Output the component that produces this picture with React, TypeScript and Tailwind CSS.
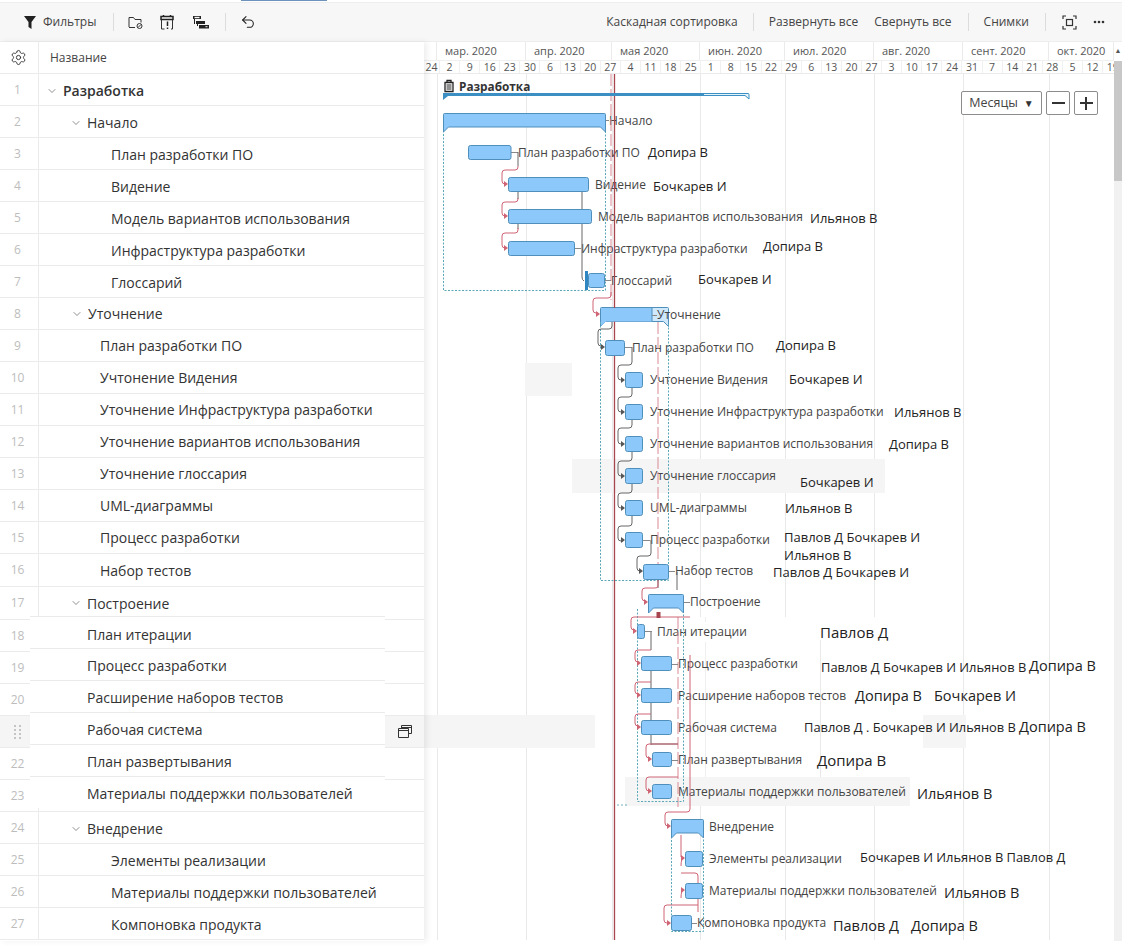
import React from 'react';
import { ChevronDown, Settings, Undo2 } from 'lucide-react';

type Row = { n: number; name: string; pad: string; open?: boolean; bold?: boolean; patch?: string; h?: string; nudge?: boolean };

const rows: Row[] = [
  { n: 1, name: 'Разработка', pad: 'pl-[7px]', open: true, bold: true, nudge: true },
  { n: 2, name: 'Начало', pad: 'pl-[31px]', open: true, nudge: true },
  { n: 3, name: 'План разработки ПО', pad: 'pl-[72px]', nudge: true },
  { n: 4, name: 'Видение', pad: 'pl-[72px]', nudge: true },
  { n: 5, name: 'Модель вариантов использования', pad: 'pl-[72px]', nudge: true },
  { n: 6, name: 'Инфраструктура разработки', pad: 'pl-[72px]', nudge: true },
  { n: 7, name: 'Глоссарий', pad: 'pl-[72px]', nudge: true },
  { n: 8, name: 'Уточнение', pad: 'pl-[32px]', open: true },
  { n: 9, name: 'План разработки ПО', pad: 'pl-[61px]' },
  { n: 10, name: 'Учтонение Видения', pad: 'pl-[61px]' },
  { n: 11, name: 'Уточнение Инфраструктура разработки', pad: 'pl-[61px]' },
  { n: 12, name: 'Уточнение вариантов использования', pad: 'pl-[61px]' },
  { n: 13, name: 'Уточнение глоссария', pad: 'pl-[61px]' },
  { n: 14, name: 'UML-диаграммы', pad: 'pl-[61px]' },
  { n: 15, name: 'Процесс разработки', pad: 'pl-[61px]' },
  { n: 16, name: 'Набор тестов', pad: 'pl-[61px]', h: 'h-[33px]' },
  { n: 17, name: 'Построение', pad: 'pl-[31px]', open: true, h: 'h-[33px]' },
  { n: 18, name: 'План итерации', pad: '', patch: 'pt-1' },
  { n: 19, name: 'Процесс разработки', pad: '', patch: 'pt-[2px]' },
  { n: 20, name: 'Расширение наборов тестов', pad: '', patch: 'pt-[2px]' },
  { n: 21, name: 'Рабочая система', pad: '', patch: 'pt-[2px]' },
  { n: 22, name: 'План развертывания', pad: '', patch: 'pt-[2px]' },
  { n: 23, name: 'Материалы поддержки пользователей', pad: '', patch: 'pt-[2px]' },
  { n: 24, name: 'Внедрение', pad: 'pl-[31px]', open: true, nudge: true },
  { n: 25, name: 'Элементы реализации', pad: 'pl-[72px]', nudge: true },
  { n: 26, name: 'Материалы поддержки пользователей', pad: 'pl-[72px]', nudge: true },
  { n: 27, name: 'Компоновка продукта', pad: 'pl-[72px]', nudge: true },
];

const months = [
  { label: 'мар. 2020', w: 'w-[89px]' },
  { label: 'апр. 2020', w: 'w-[86px]' },
  { label: 'мая 2020', w: 'w-[88px]' },
  { label: 'июн. 2020', w: 'w-[85px]' },
  { label: 'июл. 2020', w: 'w-[89px]' },
  { label: 'авг. 2020', w: 'w-[89px]' },
  { label: 'сент. 2020', w: 'w-[86px]' },
  { label: 'окт. 2020', w: 'w-[65px]' },
];

const weeks = [2, 9, 16, 23, 30, 6, 13, 20, 27, 4, 11, 18, 25, 1, 8, 15, 22, 29, 6, 13, 20, 27, 3, 10, 17, 24, 31, 7, 14, 21, 28, 5, 12, 19];

const gridLines = [437, 526, 612, 700, 785, 874, 963, 1049];

const labels: [string, number, number][] = [
  ['Начало', 609, 121],
  ['План разработки ПО', 518, 153],
  ['Видение', 595, 185],
  ['Модель вариантов использования', 598, 217],
  ['Инфраструктура разработки', 581, 249],
  ['Глоссарий', 611, 281],
  ['Уточнение', 657, 315],
  ['План разработки ПО', 632, 348],
  ['Учтонение Видения', 650, 380],
  ['Уточнение Инфраструктура разработки', 650, 412],
  ['Уточнение вариантов использования', 650, 444],
  ['Уточнение глоссария', 650, 476],
  ['UML-диаграммы', 650, 508],
  ['Процесс разработки', 650, 540],
  ['Набор тестов', 675, 571],
  ['Построение', 690, 602],
  ['План итерации', 657, 632],
  ['Процесс разработки', 678, 664],
  ['Расширение наборов тестов', 678, 696],
  ['Рабочая система', 678, 728],
  ['План развертывания', 678, 760],
  ['Материалы поддержки пользователей', 678, 792],
  ['Внедрение', 709, 827],
  ['Элементы реализации', 709, 859],
  ['Материалы поддержки пользователей', 709, 891],
  ['Компоновка продукта', 697, 923],
];

const people: [string, number, number, string?][] = [
  ['Допира В', 648, 152],
  ['Бочкарев И', 653, 186],
  ['Ильянов В', 810, 218],
  ['Допира В', 763, 246],
  ['Бочкарев И', 698, 279],
  ['Допира В', 776, 345],
  ['Бочкарев И', 789, 379],
  ['Ильянов В', 894, 412],
  ['Допира В', 889, 444],
  ['Бочкарев И', 800, 482],
  ['Ильянов В', 785, 508],
  ['Павлов Д Бочкарев И', 784, 537],
  ['Ильянов В', 784, 555],
  ['Павлов Д Бочкарев И', 773, 572],
  ['Павлов Д', 820, 632, 'text-[15px]'],
  ['Павлов Д Бочкарев И Ильянов В', 821, 667, 'text-[12.9px]'],
  ['Допира В', 1029, 666, 'text-[14.5px]'],
  ['Допира В', 855, 696, 'text-[14.5px]'],
  ['Бочкарев И', 934, 696, 'text-[14.5px]'],
  ['Павлов Д . Бочкарев И Ильянов В', 804, 727, 'text-[12.9px]'],
  ['Допира В', 1019, 727, 'text-[14.5px]'],
  ['Допира В', 817, 760, 'text-[15px]'],
  ['Ильянов В', 917, 794, 'text-[14.5px]'],
  ['Бочкарев И Ильянов В Павлов Д', 860, 857, 'text-[12.9px]'],
  ['Ильянов В', 944, 893, 'text-[14.5px]'],
  ['Павлов Д', 833, 926, 'text-[14.5px]'],
  ['Допира В', 911, 926, 'text-[14.5px]'],
];

// plain task bars: x1, x2, y1, y2
const bars = [
  [468, 511.5, 145, 159],
  [508, 589, 177, 191],
  [508, 592, 209, 223],
  [508, 575, 241, 255],
  [588, 605, 273, 287],
  [605, 625, 340, 355],
  [625, 643, 372, 387],
  [625, 643, 404, 419],
  [625, 643, 436, 451],
  [625, 643, 468, 483],
  [625, 643, 500, 515],
  [625, 643, 532, 547],
  [643, 669, 564, 579],
  [637, 645, 624, 638],
  [641, 672, 656, 670],
  [641, 672, 688, 702],
  [641, 672, 720, 734],
  [652, 672, 752, 766],
  [652, 672, 784, 798],
  [685, 703, 851, 866],
  [685, 703, 883, 898],
  [671, 692, 915, 930],
];

// dashed child frames under the summary bars
const frames = [
  [443.5, 605.5, 127, 290.5],
  [600.5, 668.5, 322, 580.5],
  [637.5, 683.5, 609, 801.5],
  [671.5, 703.5, 833, 931.5],
];

const criticalLinks = [
  'M518 166v1q0 3-3 3h-10q-3 0-3 3v8q0 3 3 3h1',
  'M518 198v1q0 3-3 3h-10q-3 0-3 3v8q0 3 3 3h1',
  'M518 228v2q0 3-3 3h-10q-3 0-3 3v9q0 3 3 3h1',
  'M611 292v3q0 3-3 3h-12q-3 0-3 3v9q0 3 3 3h2',
  'M658 580v6q0 2-3 2h-10q-3 0-3 3v7q0 3 3 3h1',
  'M690 617H634q-3 0-3 3v7q0 3 3 3h1',
  'M651 650h-13q-3 0-3 3v6q0 3 3 3h1',
  'M651 682h-13q-3 0-3 3v6q0 3 3 3h1',
  'M651 714h-13q-3 0-3 3v6q0 3 3 3h1',
  'M678 744h-29q-3 0-3 3v8q0 3 3 3h1',
  'M678 777h-29q-3 0-3 3v8q0 3 3 3h1',
  'M690 655v154q0 3-3 3h-19q-3 0-3 3v8q0 3 3 3h1',
  'M681 835v22',
  'M681 866q0-8 3-8',
  'M681 873h14q3 0 3 3v36',
  'M681 898q0-8 3-8',
  'M698 905h-31q-3 0-3 3v12q0 3 3 3h2',
];

const plainLinks = [
  'M518 152v14',
  'M518 191v8',
  'M518 223v6',
  'M582 191v86q0 3 2 4',
  'M612 322v4q0 3-3 3h-8q-3 0-3 3v11q0 3 3 3h2',
  'M632 347v15q0 3-3 3h-8q-3 0-3 3v9q0 3 3 3h2',
  'M632 387v7q0 3-3 3h-8q-3 0-3 3v9q0 3 3 3h2',
  'M632 419v6q0 3-3 3h-8q-3 0-3 3v10q0 3 3 3h2',
  'M632 451v7q0 3-3 3h-8q-3 0-3 3v9q0 3 3 3h2',
  'M632 483v7q0 3-3 3h-8q-3 0-3 3v9q0 3 3 3h2',
  'M632 515v8q0 3-3 3h-8q-3 0-3 3v9q0 3 3 3h2',
  'M651 540v13q0 3-3 3h-8q-3 0-3 3v9q0 3 3 3h2',
  'M677 572v18',
  'M658 579v9',
  'M651 632v18',
  'M651 670v75',
  'M651 744h27',
];

const critArrows = [
  [508, 184], [508, 216], [508, 248], [600, 314], [648, 602], [637, 631], [641, 663], [641, 695], [641, 727],
  [652, 759], [652, 791], [671, 826], [685, 858], [685, 890], [671, 923],
];
const plainArrows = [[605, 347], [625, 380], [625, 412], [625, 444], [625, 476], [625, 508], [625, 540], [643, 571]];

// short ticks from a bar to its caption
const ticks = [
  [605, 609, 120], [511, 518, 152], [652, 657, 315], [625, 632, 347], [643, 650, 540], [669, 675, 571], [684, 690, 602],
  [645, 652, 631], [672, 678, 664], [672, 678, 760], [575, 581, 248], [605, 611, 280], [692, 697, 923],
];

function Summary({ x1, x2, y1, y2, fill = '#8dc8fa' }: { x1: number; x2: number; y1: number; y2: number; fill?: string }) {
  return (
    <path
      d={`M${x1 + 1} ${y1}H${x2 - 1}q1 0 1 1V${y2 + 5}l-5 -5H${x1 + 5}l-5 5V${y1 + 1}q0-1 1-1z`}
      fill={fill}
      stroke="#4f8fbb"
      strokeWidth="1"
    />
  );
}

function Chart() {
  return (
    <div className="relative h-[866px] w-[690px] overflow-hidden bg-white">
      <svg className="absolute left-0 top-0" width="690" height="866" viewBox="424 74 690 866">
        {gridLines.map((x) => (
          <line key={x} x1={x + 0.5} x2={x + 0.5} y1="74" y2="940" stroke="#e9e9e9" />
        ))}
        <rect x="690" y="617" width="272" height="189" fill="#fff" />
        <line x1="705.5" x2="705.5" y1="617" y2="806" stroke="#efefef" />
        <line x1="820.5" x2="820.5" y1="640" y2="806" stroke="#e9e9e9" />
        <rect x="525" y="363" width="47" height="33" fill="#f5f5f5" />
        <rect x="572" y="459" width="313" height="34" fill="#f5f5f5" />
        <rect x="424" y="715" width="171" height="33" fill="#f5f5f5" />
        <rect x="923" y="715" width="43" height="33" fill="#f5f5f5" />
        <rect x="625" y="777" width="285" height="29" fill="#f5f5f5" />
        <rect x="645" y="622" width="110" height="20" fill="#fff" />
        {/* unfinished part of the Уточнение bar sits under its caption */}
        <Summary x1={600.5} x2={668.5} y1={307.5} y2={321.5} fill="#cfe8fb" />
      </svg>

      {labels.map(([text, x, y], i) => (
        <span
          key={i}
          className="absolute -translate-y-1/2 whitespace-nowrap text-[12px] leading-4 text-[#444]"
          style={{ left: x - 424, top: y - 74 }}
        >
          {text}
        </span>
      ))}
      {people.map(([text, x, y, size], i) => (
        <span
          key={i}
          className={`absolute -translate-y-1/2 whitespace-nowrap leading-4 text-[#222] ${size ?? 'text-[13px]'}`}
          style={{ left: x - 424, top: y - 74 }}
        >
          {text}
        </span>
      ))}
      <span className="absolute left-[35px] top-[4px] whitespace-nowrap text-[11.8px] font-bold leading-4 text-[#333]">Разработка</span>

      <svg className="absolute left-0 top-0" width="690" height="866" viewBox="424 74 690 866" fill="none">
        {/* task list icon */}
        <path d="M445 82.5h8v9h-8zM447 82v-1.5h4V82" stroke="#222" strokeWidth="1.3" />
        <path d="M446.5 85h5M446.5 87h5M446.5 89h5" stroke="#222" />

        {/* today and deadline lines */}
        <path d="M611 74v226" stroke="#d98a94" strokeWidth="1" strokeDasharray="12 3" />
        <path d="M658 322v258" stroke="#d98a94" strokeWidth="1" strokeDasharray="12 3" />
        <path d="M678 617v190" stroke="#d98a94" strokeWidth="1" strokeDasharray="12 3" />
        <path d="M614.5 74V940" stroke="#a8464f" strokeWidth="1.3" />
        <path d="M627 805h-12" stroke="#6fb0bd" strokeWidth="1" strokeDasharray="2 2" />

        {frames.map(([x1, x2, y1, y2], i) => (
          <path key={i} d={`M${x1} ${y1}V${y2}H${x2}V${y1}`} stroke="#5aa7b8" strokeWidth="1" strokeDasharray="2 1.5" />
        ))}

        {ticks.map(([x1, x2, y], i) => (
          <path key={i} d={`M${x1} ${y + 0.5}H${x2}`} stroke="#888" />
        ))}
        {plainLinks.map((d, i) => (
          <path key={i} d={d} stroke="#666" strokeWidth="1" />
        ))}
        {criticalLinks.map((d, i) => (
          <path key={i} d={d} stroke="#cf6474" strokeWidth="1" />
        ))}
        {critArrows.map(([x, y], i) => (
          <path key={i} d={`M${x} ${y}l-4-3v6z`} fill="#cf6474" />
        ))}
        {plainArrows.map(([x, y], i) => (
          <path key={i} d={`M${x} ${y}l-4-3v6z`} fill="#555" />
        ))}

        {/* project bar */}
        <path d="M703 93.5H748q1 0 1 1V99l-4-3.5H703z" fill="#e6f3fb" stroke="#3c8fc2" strokeWidth="1" />
        <path d="M443 93h261v3H448l-5 4z" fill="#3c8fc2" />

        <Summary x1={443.5} x2={605.5} y1={113.5} y2={127} />
        <path d="M601 308h51v13.5H606l-5 4.5z" fill="#8dc8fa" />
        <path d="M652 308v13" stroke="#4f8fbb" />
        <Summary x1={648.5} x2={683.5} y1={594.5} y2={608} />
        <Summary x1={671.5} x2={703.5} y1={819.5} y2={833} />
        <rect x="656.5" y="612" width="4" height="6" fill="#a8464f" />

        {bars.map(([x1, x2, y1, y2], i) => (
          <rect key={i} x={x1 + 0.5} y={y1 + 0.5} width={x2 - x1 - 1} height={y2 - y1} rx="2" fill="#8dc8fa" stroke="#4f8fbb" />
        ))}
        <rect x="585" y="271" width="3" height="19" fill="#2f86c1" />
      </svg>

      <div className="absolute right-[16px] top-[17px] flex items-center gap-1">
        <button className="flex h-[24px] w-[81px] items-center justify-center gap-1.5 rounded-[2px] border border-[#8c8c8c] bg-white text-[12.5px] text-[#444]">
          Месяцы <span className="text-[10px] text-[#333]">▼</span>
        </button>
        <button className="flex h-[24px] w-[24px] items-center justify-center rounded-[2px] border border-[#8c8c8c] bg-white">
          <span className="h-[2px] w-[13px] bg-[#333]" />
        </button>
        <button className="relative flex h-[24px] w-[24px] items-center justify-center rounded-[2px] border border-[#8c8c8c] bg-white">
          <span className="h-[2px] w-[13px] bg-[#333]" />
          <span className="absolute h-[13px] w-[2px] bg-[#333]" />
        </button>
      </div>
    </div>
  );
}

function ToolbarSep({ className }: { className: string }) {
  return <span className={`block h-[18px] w-px bg-[#dcdcdc] ${className}`} />;
}

function Toolbar() {
  return (
    <div className="flex h-[38px] items-center justify-between bg-[#f7f7f7] text-[12px] text-[#444]">
      <div className="flex items-center">
        <svg className="ml-[24px]" width="12" height="13" viewBox="0 0 12 13">
          <path d="M0 0h12L7.5 6v7L4.500 11V6z" fill="#222" />
        </svg>
        <span className="ml-[7px] w-[53px] whitespace-nowrap">Фильтры</span>
        <ToolbarSep className="ml-[17px]" />
        <svg className="ml-[14px]" width="15" height="15" viewBox="0 0 15 15" fill="none" stroke="#333">
          <path d="M1 12V2.500h4.500l1.500 2h6v3M1 12.500h6" />
          <circle cx="11.500" cy="11" r="2.500" />
          <path d="M10 12.500l3-3" />
        </svg>
        <svg className="ml-[17px]" width="14" height="15" viewBox="0 0 14 15" fill="none">
          <path d="M1 1.500h12v3H1zM3.500 0v2M10.500 0v2" stroke="#222" strokeWidth="1.500" />
          <path d="M1.500 5v9h3M12.500 5v9h-1.500" stroke="#333" />
          <path d="M7.500 6.500v4.500M7.500 12.500v1.500" stroke="#222" strokeWidth="1.500" />
        </svg>
        <svg className="ml-[19px]" width="16" height="13" viewBox="0 0 16 13" fill="#222">
          <path d="M0 0h8v3H0zM1 3h1v5H1zM3 5h9v3H3zM4 8h1v2H4zM6 9h10v3.500H6z" />
          <path d="M1.500 0.800h5v1.400h-5z" fill="#f7f7f7" />
          <path d="M12.500 10.200h2v1h-2z" fill="#f7f7f7" />
        </svg>
        <ToolbarSep className="ml-[16px]" />
        <Undo2 className="ml-[14px] text-[#222]" size={16} strokeWidth={1.6} />
      </div>
      <div className="flex items-center">
        <span className="whitespace-nowrap">Каскадная сортировка</span>
        <ToolbarSep className="ml-[15px]" />
        <span className="ml-[15px] whitespace-nowrap">Развернуть все</span>
        <span className="ml-[16px] whitespace-nowrap">Свернуть все</span>
        <ToolbarSep className="ml-[16px]" />
        <span className="ml-[15px] whitespace-nowrap">Снимки</span>
        <ToolbarSep className="ml-[16px]" />
        <svg className="ml-[16px]" width="15" height="15" viewBox="0 0 15 15" fill="none" stroke="#333" strokeWidth="1.200">
          <path d="M1 4V1h3M11 1h3v3M1 11v3h3M14 11v3h-3" />
          <rect x="4.500" y="4.500" width="6" height="6" />
        </svg>
        <svg className="ml-[16px] mr-[17px]" width="12" height="4" viewBox="0 0 12 4" fill="#333">
          <circle cx="2" cy="2" r="1.300" />
          <circle cx="6" cy="2" r="1.300" />
          <circle cx="10" cy="2" r="1.300" />
        </svg>
      </div>
    </div>
  );
}

function DragDots() {
  return (
    <svg width="7" height="14" viewBox="0 0 7 14" fill="#c4c4c4">
      {[0, 1, 2, 3].map((r) => (
        <React.Fragment key={r}>
          <rect x="0" y={r * 4} width="2" height="2" />
          <rect x="5" y={r * 4} width="2" height="2" />
        </React.Fragment>
      ))}
    </svg>
  );
}

function TableRow({ row }: { row: Row }) {
  const hovered = row.n === 21;
  return (
    <div className={`relative flex border-b border-[#ebebeb] ${row.h ?? 'h-[32px]'} ${hovered ? 'bg-[#f5f5f5]' : ''}`}>
      <div className="flex w-[39px] shrink-0 items-center justify-center border-r border-[#ebebeb] pr-[3px] text-[12px] text-[#bdbdbd]">
        {hovered ? <DragDots /> : row.n}
      </div>
      {row.patch ? (
        <div className={`absolute left-[30px] top-[-4px] flex h-[32px] w-[355px] items-center border-t border-[#ebebeb] bg-white pl-[57px] text-[14px] text-[#333] ${row.patch}`}>
          {row.name}
        </div>
      ) : (
        <div className={`flex min-w-0 flex-1 items-center text-[14px] text-[#333] ${row.pad} ${row.bold ? 'font-semibold' : ''} ${row.nudge ? 'pt-[2px]' : ''}`}>
          {row.open && <ChevronDown className="mr-[5px] shrink-0 text-[#444]" size={12} strokeWidth={1.2} />}
          <span className="whitespace-nowrap">{row.name}</span>
        </div>
      )}
      {hovered && (
        <svg className="absolute left-[398px] top-[9px]" width="14" height="13" viewBox="0 0 14 13" fill="none" stroke="#333">
          <path d="M3.500 3.500v-3h10v8h-3" />
          <path d="M3.500 2.500h10" />
          <path d="M.5 3.500h10v9H.5zM.5 5.500h10" />
        </svg>
      )}
    </div>
  );
}

export default function App() {
  return (
    <div className="h-[952px] w-[1136px] bg-white font-['Open_Sans',sans-serif]">
      <div className="w-[1122px]">
        <div className="h-[3px] border-b border-[#eeeeee] bg-white">
          <div className="ml-[241px] h-[1px] w-[86px] bg-[#6d93bc]" />
        </div>
        <Toolbar />
        <div className="flex border-t border-[#eeeeee]">
          <div className="relative z-10 h-[899px] w-[424px] shrink-0 bg-white shadow-[3px_0_6px_rgba(0,0,0,0.07)]">
            <div className="flex h-[32px] border-b border-[#ebebeb] text-[12px] text-[#444]">
              <div className="flex w-[39px] shrink-0 items-center justify-center border-r border-[#ebebeb] pr-px">
                <Settings size={17} strokeWidth={1.3} className="text-[#333]" />
              </div>
              <div className="flex items-center pl-[11px] pt-px">Название</div>
            </div>
            {rows.map((row) => (
              <TableRow key={row.n} row={row} />
            ))}
          </div>
          <div className="h-[899px] w-[690px] shrink-0 overflow-hidden">
            <div className="h-[32px] border-b border-[#ebebeb] text-[#555]">
              <div className="flex h-[19px] border-b border-[#f0f0f0] text-[11px] leading-[18px]">
                <div className="w-[13px] shrink-0 border-r border-[#ebebeb]" />
                {months.map((m) => (
                  <div key={m.label} className={`${m.w} shrink-0 whitespace-nowrap border-r border-[#ebebeb] pl-2`}>
                    {m.label}
                  </div>
                ))}
              </div>
              <div className="flex h-[12px] overflow-hidden text-[10.5px] leading-[12px]">
                <div className="w-[16px] shrink-0 border-r border-[#f0f0f0] text-center">24</div>
                {weeks.map((w, i) => (
                  <div key={i} className="w-[20.1px] shrink-0 border-r border-[#f0f0f0] text-center">
                    {w}
                  </div>
                ))}
              </div>
            </div>
            <Chart />
          </div>
          <div className="h-[899px] w-[8px] shrink-0 bg-[#f1f1f1]">
            <div className="flex h-[19px] items-center justify-center bg-white text-[7px] text-[#555]">▲</div>
            <div className="h-[120px] bg-[#c8c8c8]" />
          </div>
        </div>
      </div>
    </div>
  );
}
